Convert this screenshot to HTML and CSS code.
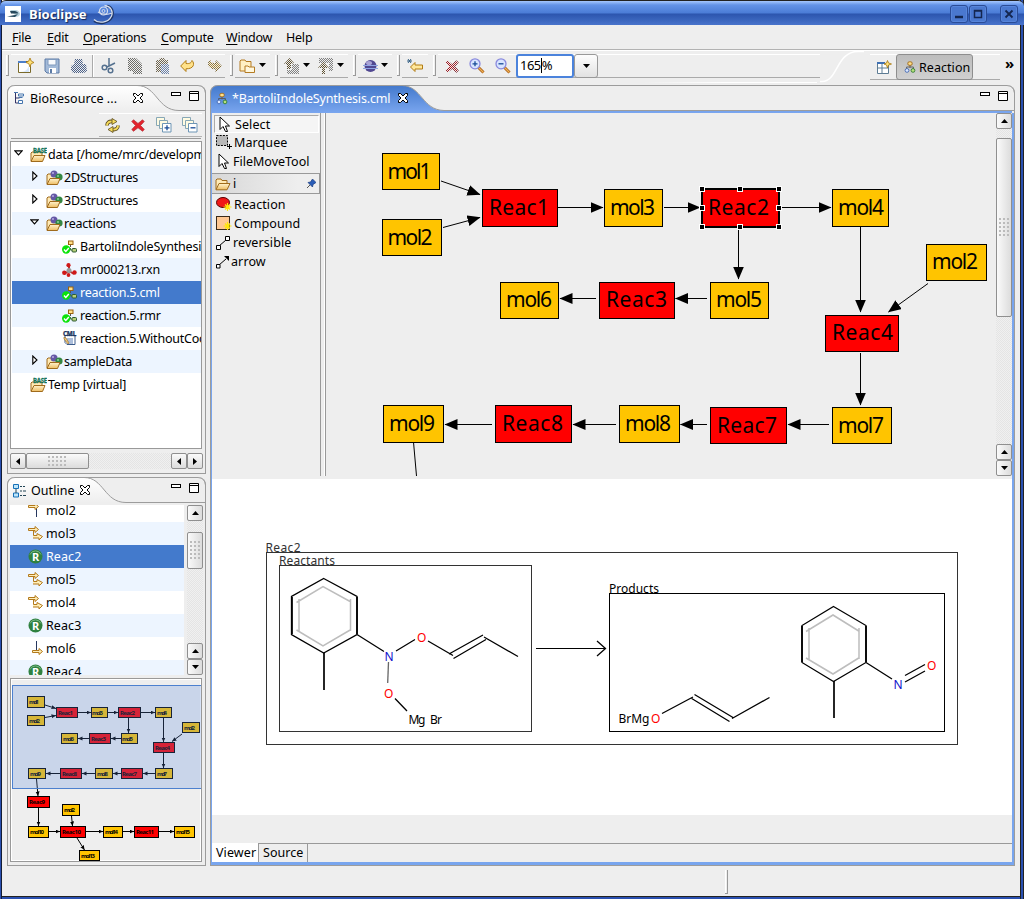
FILE: index.html
```html
<!DOCTYPE html>
<html lang="en">
<head>
<meta charset="utf-8">
<title>Bioclipse</title>
<link rel="stylesheet" href="styles.css">
</head>
<body>
<svg class="defs" width="0" height="0">
  <defs>
    <pattern id="dither" width="2" height="2" patternUnits="userSpaceOnUse"><rect width="1" height="1" fill="#eee"/><rect x="1" y="1" width="1" height="1" fill="#eee"/></pattern>
    <linearGradient id="tabBlue" x1="0" y1="0" x2="0" y2="1"><stop offset="0" stop-color="#4379cc"/><stop offset="1" stop-color="#7aa6ef"/></linearGradient>
    <linearGradient id="tabGray" x1="0" y1="0" x2="0" y2="1"><stop offset="0" stop-color="#fff"/><stop offset="1" stop-color="#eee"/></linearGradient>
    <linearGradient id="fold" x1="0" y1="0" x2="0" y2="1"><stop offset="0" stop-color="#fff3cf"/><stop offset="1" stop-color="#eebd62"/></linearGradient>
    <marker id="arr" markerUnits="userSpaceOnUse" markerWidth="14" markerHeight="12" refX="12.5" refY="5.5" orient="auto"><path d="M0 0L13 5.5L0 11Z"/></marker>
    <marker id="marr" markerUnits="userSpaceOnUse" markerWidth="6" markerHeight="6" refX="4.500" refY="2" orient="auto"><path d="M0 0L4.500 2L0 4Z"/></marker>
    <symbol id="i-react" viewBox="0 0 14 14"><path d="M7 4v4M3 10V7h8v3" fill="none" stroke="#555" /><rect x="4.5" y="1" width="5" height="4" rx="1.5" fill="#ffe08a" stroke="#9a6210"/><circle cx="3.5" cy="11" r="2.2" fill="#dbe8ff" stroke="#3d63b0"/><circle cx="10.5" cy="11" r="2.2" fill="#b7e07a" stroke="#2c7a32"/></symbol>
    <symbol id="i-close" viewBox="0 0 12 12"><path d="M1.5 1.5h2L6 4l2.500-2.500h2v2L8 6l2.500 2.500v2h-2L6 8l-2.500 2.500h-2v-2L4 6L1.500 3.500z" fill="#fff" stroke="#000"/></symbol>
    <symbol id="i-min" viewBox="0 0 10 4"><rect x=".5" y=".5" width="9" height="3" fill="#fff" stroke="#000"/></symbol>
    <symbol id="i-max" viewBox="0 0 10 10"><path d="M.5 .5h9v9h-9zM0 2.500h10" fill="#fff" stroke="#000"/></symbol>
    <symbol id="i-open" viewBox="0 0 16 14"><path d="M1 12.500V3l1-1h4l1 1.500h5V6" fill="#ffeab5" stroke="#a06b1c"/><path d="M1 12.800L4 6.500h11l-3 6.300z" fill="url(#fold)" stroke="#a06b1c"/></symbol>
    <symbol id="i-mfold" viewBox="0 0 17 16"><path d="M1 14V5l1-1h3l1 1h6v2" fill="#ffeab5" stroke="#a06b1c"/><circle cx="8" cy="4" r="3.500" fill="#6457a5"/><circle cx="13" cy="7" r="3.600" fill="#338744"/><circle cx="7" cy="3" r="1" fill="#b7aee0"/><circle cx="12" cy="6" r="1" fill="#8bd09a"/><path d="M1 14.500L4 8.500h10l-2.500 6z" fill="url(#fold)" stroke="#a06b1c"/></symbol>
    <symbol id="i-base" viewBox="0 0 17 16"><path d="M1 14V6l1-1h10v3" fill="#ffeab5" stroke="#a06b1c"/><text x="3" y="6" font-size="7" font-weight="bold" fill="#12745a" stroke="#12745a" stroke-width=".3" textLength="14" lengthAdjust="spacingAndGlyphs">BASE</text><path d="M1 14.500L4 8.500h11l-2.500 6z" fill="url(#fold)" stroke="#a06b1c"/></symbol>
    <symbol id="i-ok" viewBox="0 0 15 14"><path d="M8.500 3v4M8.500 8v2h3" fill="none" stroke="#555"/><rect x="6.500" y="1" width="4.500" height="3.500" fill="#ffe08a" stroke="#9a6210"/><rect x="10" y="8.500" width="4.500" height="3.500" rx="1" fill="#b7d07a" stroke="#2c5a32"/><circle cx="4.200" cy="9.500" r="4.200" fill="#0be30b"/><path d="M2 9.500l1.800 2L6.800 8" fill="none" stroke="#fff" stroke-width="1.400"/></symbol>
    <symbol id="i-rxn" viewBox="0 0 15 14"><path d="M7 2v6L2 11M7 8l5 3" fill="none" stroke="#b33" stroke-width="2"/><circle cx="7" cy="7.500" r="2.500" fill="#999"/><circle cx="6.500" cy="2.200" r="2.100" fill="#cf1818"/><circle cx="2.300" cy="9.800" r="2.200" fill="#cf1818"/><circle cx="12.500" cy="9.500" r="2.200" fill="#cf1818"/><circle cx="6.500" cy="12" r="1.900" fill="#cf1818"/></symbol>
    <symbol id="i-cml" viewBox="0 0 15 15"><path d="M3 4.500h10v9H5l-2-2z" fill="#fff" stroke="#3c5c8c"/><path d="M5 8h6M6 10h5M7 12h4" stroke="#5a7fb8"/><path d="M2 6l2 1 3 5-1 1-4-5z" fill="#eec97c" stroke="#8a5b18" stroke-width=".6"/><text x="1" y="5" font-size="6.500" font-weight="bold" fill="#20355e" stroke="#20355e" stroke-width=".3" textLength="13" lengthAdjust="spacingAndGlyphs">CML</text></symbol>
    <symbol id="i-two" viewBox="0 0 16 16"><path d="M.5 3.500H7v-2l3.500 3-3.500 3v-2H.500zM5.500 5.500v5H9v-2l5.500 3-3.500 3.500v-2H5" fill="#ffeeb8" stroke="#b3791a"/></symbol>
    <symbol id="i-in" viewBox="0 0 16 16"><path d="M8.500 1v9" stroke="#26375e"/><path d="M4.500 10.500H11v-2l3.500 3-3.500 3v-2H4.500z" fill="#ffeeb8" stroke="#b3791a"/></symbol>
    <symbol id="i-out" viewBox="0 0 16 16"><path d="M8.500 6v9" stroke="#26375e"/><path d="M.5 3.500H7v-2l3.500 3-3.500 3v-2H.500z" fill="#ffeeb8" stroke="#b3791a"/></symbol>
    <symbol id="i-R" viewBox="0 0 15 15"><circle cx="7.500" cy="7.500" r="7" fill="#2f8140"/><path d="M2 5.500a6 6 0 0 1 11 0" fill="none" stroke="#79b884"/><text x="4" y="11.500" font-size="11" font-weight="bold" fill="#fff">R</text></symbol>
    <symbol id="i-cursor" viewBox="0 0 11 17"><path d="M1 1v12.500l3-3L6.500 15.500h2L6.500 10h4z" fill="#fff" stroke="#000"/></symbol>
    <symbol id="i-dd" viewBox="0 0 7 4"><path d="M0 0h7L3.500 4z"/></symbol>
    <symbol id="i-up" viewBox="0 0 7 4"><path d="M0 4h7L3.500 0z"/></symbol>
    <symbol id="i-lf" viewBox="0 0 4 7"><path d="M4 0v7L0 3.500z"/></symbol>
    <symbol id="i-rt" viewBox="0 0 4 7"><path d="M0 0v7L4 3.500z"/></symbol>
    <symbol id="i-undo" viewBox="0 0 16 14"><path d="M.7 7L6 1.500v3c4 .5 5.500-1 6-3 3 3 2 8.500-6 8.300V12.500z" fill="#ffe28a" stroke="#b27c15"/></symbol>
    <symbol id="i-x" viewBox="0 0 14 13"><path d="M2.500 .8L7 4.500l4.500-3.700 1.700 1.700L9.500 6.500l3.800 4-1.800 1.700L7 8.700l-4.500 3.500L.8 10.500 4.500 6.500 .8 2.500z" fill="#e4222c" stroke="#b5343c" stroke-width=".8"/></symbol>
    <symbol id="i-stack" viewBox="0 0 16 16"><path d="M.5 .5h8v8h-8z" fill="#fffbe2" stroke="#87a7b6"/><path d="M3.500 3.500h8v8h-8z" fill="#fffbe2" stroke="#87a7b6"/><path d="M6.500 6.500h8.500v8.500H6.500z" fill="#fff" stroke="#6d95b5"/></symbol>
    <symbol id="i-zoom" viewBox="0 0 16 16"><path d="M9.500 9.500l5 5" stroke="#a85c16" stroke-width="3"/><path d="M9.500 9.500l5 5" stroke="#efb255" stroke-width="1.200"/><circle cx="6" cy="5.800" r="5" fill="#d8e4ff" stroke="#8989dd" stroke-width="1.300"/></symbol>
  </defs>
</svg>

<div class="window">
  <header class="titlebar">
    <svg class="applogo" width="16" height="16" viewBox="0 0 16 16"><rect width="16" height="16" fill="#fff"/><path d="M5 4h5c3 0 5 2 5 4s-2 3-5 3H4l6-2z" fill="#b7d2dd"/><path d="M5 5h5c2 .5 3 1.500 3.500 2.500L6 7.500zM2 10.500l8-1.500 3-1-3 3z" fill="#26485c"/></svg>
    <span class="title">Bioclipse</span>
    <svg class="swirl" width="22" height="21" viewBox="0 0 22 21" fill="none"><path d="M1 17c5 3 14 3 18-4 2-5 0-10-5-11" stroke="#1e3566" stroke-width="2.500"/><path d="M1 15.500c4 4 14 4 17.500-3.500 2-5-1-10-7-10.500M5 8c5 3 9 3 14 1" stroke="#d5dded" stroke-width="1.300"/><circle cx="10.500" cy="7" r="4" stroke="#d5dded" stroke-width="1.200"/><circle cx="10.500" cy="7" r="1.500" stroke="#d5dded"/></svg>
    <span class="spacer"></span>
    <span class="wbtn"><svg width="18" height="18"><path d="M5 12h8" stroke="#14264f" stroke-width="2.500"/></svg></span>
    <span class="wbtn"><svg width="18" height="18"><path d="M5.500 5.500h7v7h-7zM5 6h8" fill="none" stroke="#14264f" stroke-width="1.500"/></svg></span>
    <span class="wbtn wclose"><svg width="18" height="18"><path d="M5.500 5.500l7 7M12.500 5.500l-7 7" stroke="#14264f" stroke-width="1.800"/></svg></span>
  </header>

  <nav class="menubar">
    <span class="m1"><u>F</u>ile</span><span class="m2"><u>E</u>dit</span><span class="m3"><u>O</u>perations</span><span class="m4"><u>C</u>ompute</span><span class="m5"><u>W</u>indow</span><span class="m6">Help</span>
  </nav>

  <div class="toolbar">
    <i class="grip"></i>
    <div class="group g1">
      <svg width="17" height="16" viewBox="0 0 17 16"><path d="M1.500 3.500h12v11h-12z" fill="#fff" stroke="#7a6a2a"/><path d="M1 4h8" stroke="#4d7fc9" stroke-width="2"/><path d="M3 14c6 0 8-3 9-7v7z" fill="#d7e7fb"/><path d="M13 0l1.200 3L17 4.500l-2.800 1.200L13 9l-1.200-3.300L9 4.500 11.800 3z" fill="#ffe27a" stroke="#a87911" stroke-width=".8"/></svg>
      <svg width="16" height="16" viewBox="0 0 16 16"><path d="M1 1h14v14H3l-2-2z" fill="#a3bad8" stroke="#5d7ba6"/><path d="M4 1.500h8V7H4z" fill="#f7f9fc" stroke="#7e99bd"/><path d="M5 10h7v5H5z" fill="#fff"/><path d="M6 11h2v4H6z" fill="#5d7ba6"/></svg>
      <svg width="16" height="16" viewBox="0 0 16 16"><path d="M4 1h7l1 5h3l1 7-3 2H2l-2-3V8l3-2z" fill="#4c6188"/><rect width="16" height="16" fill="url(#dither)"/></svg>
      <i class="tsep"></i>
      <svg width="16" height="16" viewBox="0 0 16 16"><path d="M8 0v8M14 5L6 9" stroke="#55718f" stroke-width="1.500"/><circle cx="3.500" cy="9.500" r="2.300" fill="none" stroke="#55718f" stroke-width="1.500"/><circle cx="9.500" cy="12.500" r="2.300" fill="none" stroke="#55718f" stroke-width="1.500"/></svg>
      <svg width="16" height="16" viewBox="0 0 16 16"><path d="M1 0h8l4 4 2 2v10H6v-3H1z" fill="#6c6c68"/><rect width="16" height="16" fill="url(#dither)"/></svg>
      <svg width="16" height="16" viewBox="0 0 16 16"><path d="M2 2h3l1-2h4l1 2h3v4l1 2v8H7v-2H2z" fill="#6f654f"/><path d="M7 6h8v10H7z" fill="#6980a8"/><rect width="16" height="16" fill="url(#dither)"/></svg>
      <svg width="16" height="14"><use href="#i-undo"/></svg>
      <svg width="16" height="14" viewBox="0 0 16 14"><g transform="matrix(-1 0 0 1 16 0)"><path d="M.7 7L6 1.500v3c4 .5 5.500-1 6-3 3 3 2 8.500-6 8.300V12.500z" fill="#a58435" stroke="#705a24"/></g><rect width="16" height="14" fill="url(#dither)"/></svg>
    </div>
    <i class="grip"></i>
    <div class="group g2">
      <svg width="17" height="16" viewBox="0 0 17 16"><path d="M1 13V3l1-1h4l1 1.500h5V13z" fill="#fff0c4" stroke="#b47b22"/><path d="M6 14.500V8h3l1 1h5.500v5.500z" fill="#fff7dd" stroke="#b47b22"/></svg>
      <svg class="dd" width="7" height="4"><use href="#i-dd"/></svg>
    </div>
    <i class="grip"></i>
    <div class="group g3">
      <svg width="16" height="16" viewBox="0 0 16 16"><path d="M5.500 0L10 5 7 6v5H3V6L0 6z" fill="#5e5030"/><path d="M8 6h7v10H3v-4h5z" fill="#808080"/><rect width="16" height="16" fill="url(#dither)"/></svg>
      <svg class="dd" width="7" height="4"><use href="#i-dd"/></svg>
      <svg class="dn" width="16" height="16" viewBox="0 0 16 16"><path d="M1 0h14v5H1zM11 5h4v8h-4z" fill="#808080"/><path d="M5.500 4L11 10H7v6H4v-6H0z" fill="#5e5030"/><rect width="16" height="16" fill="url(#dither)"/></svg>
      <svg class="dd" width="7" height="4"><use href="#i-dd"/></svg>
    </div>
    <i class="grip"></i>
    <div class="group g4">
      <svg width="15" height="14" viewBox="0 0 15 14"><circle cx="7.500" cy="7" r="6" fill="#514891"/><ellipse cx="6" cy="4" rx="3" ry="2" fill="#a9a3d6"/><path d="M0 6.500h15M0 9.500h15" stroke="#8ea4e4"/></svg>
      <svg class="dd" width="7" height="4"><use href="#i-dd"/></svg>
    </div>
    <i class="grip"></i>
    <div class="group g5">
      <svg width="16" height="14" viewBox="0 0 16 14"><path d="M3.500 8L8 3.500V6h7.500v4H8v2.500z" fill="#ffe79b" stroke="#b27c15"/><path d="M0 2h5M1 0l3 4M4 0L1 4" stroke="#27567d" stroke-width=".9"/></svg>
    </div>
    <i class="grip"></i>
    <div class="group g6">
      <svg width="14" height="13" viewBox="0 0 14 13"><path d="M2.500 .8L7 4.500l4.500-3.700 1.700 1.700L9.500 6.500l3.800 4-1.800 1.700L7 8.700l-4.500 3.500L.8 10.500 4.500 6.500 .8 2.500z" fill="#a8141c" stroke="#80343c"/><rect width="14" height="13" fill="url(#dither)"/></svg>
      <svg width="16" height="16" viewBox="0 0 16 16"><use href="#i-zoom"/><path d="M3.500 5.800h5M6 3.300v5" stroke="#164a96" stroke-width="1.300"/></svg>
      <svg width="16" height="16" viewBox="0 0 16 16"><use href="#i-zoom"/><path d="M3.500 5.800h5" stroke="#164a96" stroke-width="1.300"/></svg>
      <div class="combo"><span>165</span><i class="caret"></i><span>%</span></div>
      <div class="combobtn"><svg width="7" height="4"><use href="#i-dd"/></svg></div>
    </div>
    <svg class="swoosh" width="44" height="33" viewBox="0 0 44 33"><path d="M0 31.500h2C18 31.500 16 1.500 38 1.500h6" fill="none" stroke="#fff" stroke-width="1.500"/></svg>
    <div class="group persp">
      <svg width="15" height="15" viewBox="0 0 15 15"><path d="M.5 3.500h11v10H.500zM.500 8h11M5 4v10" fill="#fff" stroke="#5d7c94"/><path d="M0 3h8" stroke="#3e70b4" stroke-width="2"/><path d="M10.500 .5l1 2.500 3 1-3 1-1 3-1-3-2.500-1 2.500-1z" fill="#ffe27a" stroke="#a87911" stroke-width=".8"/></svg>
      <div class="active"><svg width="12" height="12"><use href="#i-react"/></svg><span>Reaction</span></div>
    </div>
    <span class="more">»</span>
  </div>

  <main class="work">
    <div class="left">
      <section class="view v1">
        <div class="vhead">
          <svg class="tabshape" width="199" height="26" viewBox="0 0 199 26"><path d="M.5 26V6L6 .5H130C150 .500 150 25.500 172 25.500H1z" fill="url(#tabGray)"/><path d="M.5 26V7Q1 .500 8 .500H191Q198 1 198.500 8V26M130 .5C150 .500 150 25.500 172 25.500H199" fill="none" stroke="#9c9c9c"/></svg>
          <svg class="vi" width="10" height="13" viewBox="0 0 10 13"><path d="M1.500 1v10h4M1.500 6h4" fill="none" stroke="#336"/><path d="M0 .5h4M4.500 2v2h5V2zM4.500 5.500h4M4.500 8.500v3h4v-3z" fill="#fff" stroke="#4574ad"/></svg>
          <span class="vt">BioResource ...</span>
          <svg class="vx" width="12" height="12"><use href="#i-close"/></svg>
          <svg class="vmin" width="10" height="4"><use href="#i-min"/></svg>
          <svg class="vmax" width="10" height="10"><use href="#i-max"/></svg>
        </div>
        <div class="vtools">
          <svg width="17" height="15" viewBox="0 0 17 15"><path d="M8.500 3.500C5 3 3 4.500 3 7.500M8.500 11.500c3.500 .5 5.500-1 5.500-4" fill="none" stroke="#5a4a1c" stroke-width="3.600"/><path d="M8.500 3.500C5 3 3 4.500 3 7.500M8.500 11.500c3.500 .5 5.500-1 5.500-4" fill="none" stroke="#f7dc5c" stroke-width="2"/><path d="M8 .5l5 3-5 3zM9 8.500l-5 3 5 3z" fill="#f7dc5c" stroke="#5a4a1c" stroke-width=".8"/></svg>
          <svg width="14" height="13"><use href="#i-x"/></svg>
          <svg width="16" height="16" viewBox="0 0 16 16"><use href="#i-stack"/><path d="M8.500 10.800h5M11 8.300v5" stroke="#164a96" stroke-width="1.300"/></svg>
          <svg width="16" height="16" viewBox="0 0 16 16"><use href="#i-stack"/><path d="M8.500 10.800h5" stroke="#164a96" stroke-width="1.300"/></svg>
        </div>
        <div class="tree">
          <div class="row l0"><svg class="tw" width="9" height="6" viewBox="0 0 9 6"><path d="M.8 .8h7.400L4.500 4.800z" fill="#fff" stroke="#000" stroke-width="1.200"/></svg><svg width="17" height="16"><use href="#i-base"/></svg><span>data [/home/mrc/developm</span></div>
          <div class="row l1 alt"><svg class="tr" width="6" height="10" viewBox="0 0 6 10"><path d="M.8 1v8L5 5z" fill="#fff" stroke="#000" stroke-width="1.100"/></svg><svg width="17" height="16"><use href="#i-mfold"/></svg><span>2DStructures</span></div>
          <div class="row l1"><svg class="tr" width="6" height="10" viewBox="0 0 6 10"><path d="M.8 1v8L5 5z" fill="#fff" stroke="#000" stroke-width="1.100"/></svg><svg width="17" height="16"><use href="#i-mfold"/></svg><span>3DStructures</span></div>
          <div class="row l1 alt"><svg class="tw" width="9" height="6" viewBox="0 0 9 6"><path d="M.8 .8h7.400L4.500 4.800z" fill="#fff" stroke="#000" stroke-width="1.200"/></svg><svg width="17" height="16"><use href="#i-mfold"/></svg><span>reactions</span></div>
          <div class="row l2"><svg width="15" height="14"><use href="#i-ok"/></svg><span>BartoliIndoleSynthesis</span></div>
          <div class="row l2 alt"><svg width="15" height="14"><use href="#i-rxn"/></svg><span>mr000213.rxn</span></div>
          <div class="row l2 sel"><svg width="15" height="14"><use href="#i-ok"/></svg><span>reaction.5.cml</span></div>
          <div class="row l2 alt"><svg width="15" height="14"><use href="#i-ok"/></svg><span>reaction.5.rmr</span></div>
          <div class="row l2"><svg width="15" height="15"><use href="#i-cml"/></svg><span>reaction.5.WithoutCoo</span></div>
          <div class="row l1 alt"><svg class="tr" width="6" height="10" viewBox="0 0 6 10"><path d="M.8 1v8L5 5z" fill="#fff" stroke="#000" stroke-width="1.100"/></svg><svg width="17" height="16"><use href="#i-mfold"/></svg><span>sampleData</span></div>
          <div class="row l0 notw"><svg width="17" height="16"><use href="#i-base"/></svg><span>Temp [virtual]</span></div>
        </div>
        <div class="hscroll">
          <b class="sb"><svg width="4" height="7"><use href="#i-lf"/></svg></b>
          <b class="sb hthumb"><i class="dots"></i></b>
          <span class="spacer"></span>
          <b class="sb"><svg width="4" height="7"><use href="#i-lf"/></svg></b>
          <b class="sb"><svg width="4" height="7"><use href="#i-rt"/></svg></b>
        </div>
      </section>

      <section class="view v2">
        <div class="vhead">
          <svg class="tabshape" width="199" height="26" viewBox="0 0 199 26"><path d="M.5 26V6L6 .5H77C97 .500 97 25.500 119 25.500H1z" fill="url(#tabGray)"/><path d="M.5 26V7Q1 .500 8 .500H191Q198 1 198.500 8V26M77 .5C97 .500 97 25.500 119 25.500H199" fill="none" stroke="#9c9c9c"/></svg>
          <svg class="vi" width="13" height="14" viewBox="0 0 13 14"><path d="M.5 .5h5v4h-5zM.500 9h5v4h-5z" fill="#bfe6fa" stroke="#1670b8"/><path d="M3 5v4M7 2.500h2M7 7h2M7 11.500h2M10 7h3M10 2.500h2M10 11.500h3" stroke="#245"/></svg>
          <span class="vt">Outline</span>
          <svg class="vx" width="12" height="12"><use href="#i-close"/></svg>
          <svg class="vmin" width="10" height="4"><use href="#i-min"/></svg>
          <svg class="vmax" width="10" height="10"><use href="#i-max"/></svg>
        </div>
        <div class="olist">
          <div class="orows">
            <div class="orow"><svg width="16" height="16"><use href="#i-out"/></svg><span>mol2</span></div>
            <div class="orow alt"><svg width="16" height="16"><use href="#i-two"/></svg><span>mol3</span></div>
            <div class="orow sel"><svg width="15" height="15"><use href="#i-R"/></svg><span class="rc">Reac2</span></div>
            <div class="orow alt"><svg width="16" height="16"><use href="#i-two"/></svg><span>mol5</span></div>
            <div class="orow"><svg width="16" height="16"><use href="#i-two"/></svg><span>mol4</span></div>
            <div class="orow alt"><svg width="15" height="15"><use href="#i-R"/></svg><span class="rc">Reac3</span></div>
            <div class="orow"><svg width="16" height="16"><use href="#i-in"/></svg><span>mol6</span></div>
            <div class="orow alt"><svg width="15" height="15"><use href="#i-R"/></svg><span class="rc">Reac4</span></div>
          </div>
          <div class="vscroll">
            <b class="sb"><svg width="7" height="4"><use href="#i-up"/></svg></b>
            <b class="sb othumb"><i class="dots"></i></b>
            <span class="spacer"></span>
            <b class="sb"><svg width="7" height="4"><use href="#i-up"/></svg></b>
            <b class="sb"><svg width="7" height="4"><use href="#i-dd"/></svg></b>
          </div>
        </div>
        <div class="mini">
          <svg width="189" height="181" viewBox="12 680 189 181">
            <g class="mw">
              <path d="M45 705L56 708.500"/><path d="M45 717.500L56 715.500"/><path d="M78 712.500H91"/><path d="M108 712.500H118"/><path d="M141 712.500H155"/><path d="M128.500 718V733"/><path d="M163.500 718V742"/><path d="M182 734L172 741.500"/><path d="M121 738.500H111"/><path d="M89 738.500H78"/><path d="M163.500 753V768"/><path d="M155 773.500H143"/><path d="M121 773.500H113"/><path d="M95 773.500H82"/><path d="M60 773.500H46"/><path d="M36.500 779L38 796"/><path d="M38.500 808V826"/><path d="M71.500 816L72.500 826"/><path d="M49 831.500H60"/><path d="M86 831.500H103"/><path d="M123 831.500H134"/><path d="M159 831.500H174"/><path d="M77 838L84.500 850"/>
            </g>
            <g class="my"><rect x="27.500" y="696.500" width="17" height="11"/><rect x="27.500" y="715.500" width="17" height="10"/><rect x="91.500" y="707.500" width="16" height="10"/><rect x="155.500" y="707.500" width="16" height="10"/><rect x="182.500" y="722.500" width="17" height="10"/><rect x="121.500" y="733.500" width="16" height="10"/><rect x="61.500" y="733.500" width="16" height="10"/><rect x="28.500" y="768.500" width="17" height="10"/><rect x="95.500" y="768.500" width="17" height="10"/><rect x="155.500" y="768.500" width="17" height="10"/><rect x="62.500" y="804.500" width="17" height="11"/><rect x="28.500" y="826.500" width="20" height="11"/><rect x="103.500" y="826.500" width="19" height="11"/><rect x="174.500" y="826.500" width="20" height="11"/><rect x="79.500" y="850.500" width="20" height="10"/></g>
            <g class="mr"><rect x="56.500" y="707.500" width="21" height="10"/><rect x="118.500" y="707.500" width="22" height="10"/><rect x="89.500" y="733.500" width="21" height="10"/><rect x="153.500" y="742.500" width="21" height="10"/><rect x="60.500" y="768.500" width="21" height="10"/><rect x="121.500" y="768.500" width="21" height="10"/><rect x="27.500" y="796.500" width="22" height="11"/><rect x="60.500" y="826.500" width="25" height="11"/><rect x="134.500" y="826.500" width="24" height="11"/></g>
            <g class="mt">
              <text x="29" y="704" textLength="10">mol1</text><text x="29" y="723" textLength="11">mol2</text><text x="58" y="715" textLength="15">Reac1</text><text x="92" y="715" textLength="11">mol3</text><text x="120" y="715" textLength="15">Reac2</text><text x="157" y="715" textLength="10">mol4</text><text x="184" y="730" textLength="11">mol2</text><text x="155" y="750" textLength="15">Reac4</text><text x="122" y="741" textLength="11">mol5</text><text x="91" y="741" textLength="15">Reac3</text><text x="63" y="741" textLength="11">mol6</text><text x="30" y="776" textLength="11">mol9</text><text x="62" y="776" textLength="15">Reac8</text><text x="97" y="776" textLength="11">mol8</text><text x="122" y="776" textLength="15">Reac7</text><text x="157" y="776" textLength="10">mol7</text><text x="29" y="804" textLength="16">Reac9</text><text x="64" y="812" textLength="11">mol2</text><text x="30" y="834" textLength="14">mol10</text><text x="62" y="834" textLength="19">Reac10</text><text x="105" y="834" textLength="13">mol14</text><text x="136" y="834" textLength="18">Reac11</text><text x="176" y="834" textLength="14">mol15</text><text x="81" y="858" textLength="14">mol13</text>
            </g>
            <rect x="12.500" y="685.500" width="192" height="103" fill="#5b8be0" fill-opacity=".25" stroke="#4c80cf"/>
          </svg>
        </div>
      </section>
    </div>

    <section class="editor">
      <div class="ehead">
        <svg class="tabshape" width="805" height="28" viewBox="0 0 805 28"><path d="M.5 28V8Q1 .500 8 .500H192C212 1 212 25.500 234 25.500H802V28z" fill="url(#tabBlue)"/><path d="M.5 28V8Q1 .500 8 .500H797Q804 1 804.500 8V28M192 .5C212 1 212 25 234 25.500H804" fill="none" stroke="#9c9c9c"/></svg>
        <svg class="vi" width="12" height="13"><use href="#i-react"/></svg>
        <span class="vt">*BartoliIndoleSynthesis.cml</span>
        <svg class="vx" width="12" height="12"><use href="#i-close"/></svg>
        <svg class="vmin" width="10" height="4"><use href="#i-min"/></svg>
        <svg class="vmax" width="10" height="10"><use href="#i-max"/></svg>
      </div>
      <div class="ebody">
        <div class="top">
          <aside class="palette">
            <div class="pitem on"><svg width="11" height="17"><use href="#i-cursor"/></svg><span>Select</span></div>
            <div class="pitem"><svg width="17" height="15" viewBox="0 0 17 15"><rect x=".5" y=".5" width="11" height="10" fill="#b8b8b8" stroke="#000" stroke-dasharray="2 1.200"/><path d="M11 11.500h5M13.500 9v5" stroke="#000"/></svg><span class="mq">Marquee</span></div>
            <div class="pitem fm"><svg width="11" height="17"><use href="#i-cursor"/></svg><span>FileMoveTool</span></div>
            <div class="drawer"><svg width="16" height="14"><use href="#i-open"/></svg><span>i</span><svg class="pin" width="9" height="9" viewBox="0 0 9 9"><path d="M0 9l3-3" stroke="#555"/><path d="M1 3.500l2.500-.5L5.500 0 9 3.500 6 5.500 5.500 8z" fill="#2a5db8" stroke="#173a7c" stroke-width=".7"/></svg></div>
            <div class="pitem p1"><svg width="16" height="15" viewBox="0 0 16 15"><ellipse cx="7" cy="5.500" rx="6.500" ry="5" fill="#f01818" stroke="#500"/><path d="M11.500 6v8M7.500 10h8M9 7.500l5 5M14 7.500l-5 5" stroke="#ffe60a" stroke-width="1.200"/></svg><span>Reaction</span></div>
            <div class="pitem"><svg width="16" height="15" viewBox="0 0 16 15"><rect x=".5" y=".5" width="13" height="13" fill="#ffc893" stroke="#3a2a1a"/><path d="M11.500 6v8M7.500 10h8M9 7.500l5 5M14 7.500l-5 5" stroke="#ffe60a" stroke-width="1.200"/></svg><span>Compound</span></div>
            <div class="pitem"><svg width="14" height="14" viewBox="0 0 14 14"><path d="M3 10l7-6" stroke="#000"/><path d="M.5 9.500h4v4h-4zM9.500 .5h4v4h-4z" fill="#fff" stroke="#000"/></svg><span class="rv">reversible</span></div>
            <div class="pitem"><svg width="14" height="14" viewBox="0 0 14 14"><path d="M3 10l7-6" stroke="#000"/><path d="M.5 9.500h3.500v3.500H.500z" fill="#fff" stroke="#000"/><path d="M8 1h5v5z"/></svg><span class="ar">arrow</span></div>
          </aside>
          <svg class="canvas" width="670" height="366" viewBox="326 113 670 366">
            <g stroke="#000" fill="none" marker-end="url(#arr)">
              <path d="M441 181L480 194.500"/><path d="M443 227.500L480 217.500"/><path d="M558 207.500H603"/><path d="M664 207.500H700" /><path d="M782 207.500H831"/><path d="M738.500 230V279"/><path d="M860.500 227V312"/><path d="M928 283.500L888.500 312"/><path d="M707 298.500H675.500"/><path d="M596 298.500H560"/><path d="M860.500 353V405"/><path d="M829 424.500H788"/><path d="M707 424.500H680.500"/><path d="M616 424.500H573"/><path d="M492 424.500H445"/>
            </g>
            <path d="M413.500 442L416.500 476" stroke="#000"/>
            <g fill="#ffc400" stroke="#000"><rect x="382.500" y="153.500" width="57" height="36"/><rect x="382.500" y="219.500" width="59" height="36"/><rect x="604.500" y="189.500" width="58" height="37"/><rect x="500.500" y="282.500" width="58" height="36"/><rect x="832.500" y="189.500" width="56" height="37"/><rect x="926.500" y="244.500" width="60" height="36"/><rect x="710.500" y="282.500" width="58" height="36"/><rect x="832.500" y="407.500" width="59" height="36"/><rect x="619.500" y="405.500" width="60" height="37"/><rect x="383.500" y="405.500" width="60" height="37"/></g>
            <g fill="#f00" stroke="#000"><rect x="482.500" y="189.500" width="75" height="37"/><rect x="599.500" y="282.500" width="75" height="36"/><rect x="825.500" y="315.500" width="73" height="36"/><rect x="710.500" y="407.500" width="76" height="36"/><rect x="495.500" y="405.500" width="76" height="37"/><rect x="702" y="189" width="77" height="38" stroke-width="2"/></g>
            <g class="nt">
              <text x="387.500" y="179" textLength="44">mol1</text><text x="387.500" y="245" textLength="45">mol2</text><text x="489" y="215" textLength="60">Reac1</text><text x="610" y="215" textLength="45">mol3</text><text x="708" y="215" textLength="61">Reac2</text><text x="838" y="215" textLength="46">mol4</text><text x="932" y="269" textLength="46">mol2</text><text x="506" y="307" textLength="46">mol6</text><text x="606" y="307" textLength="61">Reac3</text><text x="716" y="307" textLength="46">mol5</text><text x="832" y="340" textLength="61">Reac4</text><text x="838" y="433" textLength="46">mol7</text><text x="717" y="433" textLength="60">Reac7</text><text x="625" y="431" textLength="46">mol8</text><text x="502" y="431" textLength="61">Reac8</text><text x="389" y="431" textLength="46">mol9</text>
            </g>
            <g fill="#000" stroke="#fff"><rect x="699.500" y="186.500" width="5" height="5"/><rect x="737.500" y="186.500" width="5" height="5"/><rect x="776.500" y="186.500" width="5" height="5"/><rect x="699.500" y="205.500" width="5" height="5"/><rect x="776.500" y="205.500" width="5" height="5"/><rect x="699.500" y="224.500" width="5" height="5"/><rect x="737.500" y="224.500" width="5" height="5"/><rect x="776.500" y="224.500" width="5" height="5"/></g>
          </svg>
          <div class="vscroll cs">
            <b class="sb"><svg width="7" height="4"><use href="#i-up"/></svg></b>
            <b class="sb cthumb"><i class="dots"></i></b>
            <span class="spacer"></span>
            <b class="sb"><svg width="7" height="4"><use href="#i-up"/></svg></b>
            <b class="sb"><svg width="7" height="4"><use href="#i-dd"/></svg></b>
          </div>
        </div>
        <div class="viewer">
          <svg width="800" height="336" viewBox="212 479 800 336">
            <g fill="none" stroke="#333"><rect x="266.500" y="552.500" width="691" height="192"/><rect x="279.500" y="565.500" width="252" height="166"/><rect x="609.500" y="593.500" width="335" height="138" stroke="#000"/></g>
            <g class="rt"><text x="265.500" y="552" textLength="35" fill="#333">Reac2</text><text x="279" y="565" textLength="56" fill="#333">Reactants</text><text x="609" y="593" textLength="50">Products</text></g>
            <g fill="none" stroke="#bdbdbd" stroke-width="1.500"><path d="M296.500 602.500L323 586.500L351 602M350.500 599V631M351 629.500L323 646L296.500 630M299 599V632"/><path d="M806 631.500L833 615L859.500 631.500M859 628V659M859.500 657.500L833 674L806 658M809 628V659"/></g>
            <g fill="none" stroke="#000" stroke-width="1.300">
              <path d="M323.700 578.500L357 596.500V634.500L323.700 653L291.500 634.500V596.500zM357 634.500L384 651.500M396 651L415 639.500M428 641L453 655.500M449 654L483 635M453.500 658.500L486 639.500M484 637L518 656.500M395 698.500L407 711"/>
              <path d="M388.500 662L387.700 683" stroke="#666"/>
              <path d="M536 648.500H605" stroke-width="1"/><path d="M597 641L605.500 648.500L597 656"/>
              <path d="M833.500 606.500L866 625.500V662.500L833.500 681.500L802 662.500V625.500zM866 662.500L892 679M905 675.500L925 664.500M905 682L925 671M662 713.500L693 697M694.500 694.500L733 717.500M691.700 698.500L729.500 721.500M732 718.500L769.500 697.500"/>
              <path d="M324 653V690M834 681V718M292 597V634M357 597V634M802 626V662M866 626V662" stroke-width="1.700"/>
            </g>
            <g class="at"><text x="384.500" y="660.500" fill="#11c">N</text><text x="417" y="642" fill="#f00" textLength="9">O</text><text x="384" y="697.500" fill="#f00" textLength="9">O</text><text x="408.500" y="723.500" textLength="17">Mg</text><text x="430" y="723.500" textLength="12">Br</text><text x="618.500" y="722.500" textLength="31">BrMg</text><text x="651" y="723" fill="#f00" textLength="9">O</text><text x="893.500" y="688.500" fill="#11c">N</text><text x="927" y="670" fill="#f00" textLength="9">O</text></g>
          </svg>
        </div>
        <div class="gap"></div>
        <div class="btabs"><span class="cur">Viewer</span><span class="src">Source</span></div>
      </div>
    </section>
  </main>
  <footer class="status"><i></i></footer>
</div>
</body>
</html>
```

FILE: styles.css
```css
* { box-sizing: border-box; }
body { margin: 0; width: 1024px; height: 899px; overflow: hidden; background: #2a50b0; font-family: "Noto Sans", "Open Sans", sans-serif; font-size: 12.5px; letter-spacing: -.22px; color: #000; }
svg { display: block; flex: none; }
span { white-space: nowrap; }
.defs { position: absolute; }
.spacer { flex: 1; }
.window { display: flex; flex-direction: column; height: 899px; background: #eee; box-shadow: inset 1px 0 #2a50b0, inset 2px 0 #141c33, inset -1px 0 #222, inset -3px 0 #2a50b0, inset -4px 0 #222, inset 0 -2px #2a50b0, inset 0 -3px #222; }

.titlebar { display: flex; align-items: center; flex: none; height: 25px; padding: 2px 6px 0 5px; border-top: 1px solid #222; border-radius: 6px 6px 0 0; background: linear-gradient(#a6c8ff 0, #6393e8 4px, #4b7cd6 12px, #2c55ae 13px, #3d68c0 20px, #4873cb 24px); }
.title { margin: -1px 0 0 8px; width: 62px; color: #fff; font: bold 13px "Noto Sans", "Open Sans", sans-serif; letter-spacing: 0; text-shadow: 1px 1px 1px #14264f; }
.swirl { margin-left: 2px; }
.wbtn { width: 18px; height: 18px; margin: -1px 0 0 1px; border: 1px solid #2a4c97; border-radius: 3px; background: #4a78cf; box-shadow: inset 0 0 0 1px #5785da; }
.wbtn svg { margin: -1px; }
.wclose { margin-left: 13px; }

.menubar { display: flex; flex: none; height: 25px; margin: 0 4px 0 2px; padding: 3px 0 0 10px; line-height: 19px; border-bottom: 1px solid #b2b2b2; }
.menubar u { text-underline-offset: 2px; }
.m1 { width: 35px; } .m2 { width: 36px; } .m3 { width: 78px; } .m4 { width: 65px; } .m5 { width: 60px; }

.toolbar { display: flex; flex: none; height: 33px; margin: 0 4px 0 2px; padding: 3px 0 0 4px; border-top: 1px solid #fff; background: linear-gradient(90deg, transparent 640px, #fff 720px) 0 31px / 815px 1px no-repeat; }
.grip { flex: none; width: 3px; height: 21px; margin: 1px 2px 0 0; border: solid #999; border-width: 0 1px 1px 0; box-shadow: inset 1px 0 #fff; }
.group { display: flex; align-items: center; flex: none; height: 24px; border-top: 1px solid #fff; border-bottom: 1px solid #aaa; }
.group + .grip { margin-left: 5px; }
.g1 { width: 214px; padding-left: 6px; gap: 10.300px; }
.tsep { width: 1px; height: 22px; background: #aaa; box-shadow: 1px 0 #fff; margin: 0 -2px 0 -5px; }
.g2 { width: 35px; padding-left: 4px; }
.dd { margin: -3px 0 0 3px; }
.g3 { width: 68px; padding-left: 4px; }
.dn { margin-left: 8px; }
.g4 { width: 34px; padding-left: 5px; }
.g5 { width: 26px; padding-left: 5px; }
.g6 { width: 382px; padding-left: 7px; gap: 10px; }
.combo { display: flex; align-items: center; width: 58px; height: 24px; margin-left: -5px; padding: 0 0 2px 2px; border: 2px solid #4b83dc; border-radius: 3px; background: #fff; font-size: 13px; letter-spacing: -.5px; }
.caret { width: 1px; height: 15px; background: #000; }
.combobtn { display: flex; align-items: center; justify-content: center; width: 24px; height: 24px; margin-left: -10px; border: 1px solid #999; border-radius: 3px; background: linear-gradient(#fdfdfd, #e2e2e2); }
.swoosh { margin: -4px 6px 0 0; }
.persp { width: 130px; height: 26px; padding-left: 7px; }
.active { display: flex; align-items: center; width: 77px; height: 26px; margin-left: 4px; padding-left: 7px; gap: 3px; border: 1px solid #8e8e8e; border-radius: 3px; background: linear-gradient(#bdbdbd, #d0d0d0); letter-spacing: .05px; }
.more { margin: -1px 0 0 5px; font-size: 15px; font-weight: bold; line-height: 20px; }

.work { display: flex; flex: none; height: 783px; padding: 2px 0 0 7px; }
.left { display: flex; flex-direction: column; width: 199px; margin-right: 4px; gap: 3px; }
.view { display: flex; flex-direction: column; height: 389px; border: solid #9c9c9c; border-width: 0 1px 1px; border-radius: 8px 8px 0 0; }
.vhead { position: relative; display: flex; flex: none; height: 26px; margin: 0 -1px; padding-left: 7px; }
.vhead > *, .ehead > * { position: relative; flex: none; }
.vhead .tabshape, .ehead .tabshape { position: absolute; left: 0; top: 0; }
.vi { margin: 7px 0 0; }
.vt { line-height: 28px; }
.vx { margin-top: 7px; }
.vmin { margin-top: 7px; }
.vmax { margin: 6px 0 0 8px; }
.v1 .vt { width: 100px; margin-left: 6px; letter-spacing: .05px; } .v1 .vx { margin-left: 2px; } .v1 .vmin { margin-left: 27px; }
.v2 .vi { margin-left: -1px; } .v2 .vt { width: 48px; margin-left: 5px; letter-spacing: .05px; } .v2 .vmin { margin-left: 80px; }
.vtools { display: flex; align-items: center; justify-content: flex-end; height: 24px; margin: 2px 3px 1px 91px; padding-right: 4px; gap: 10.400px; border-top: 1px solid #fff; border-bottom: 1px solid #b4b4b4; }
.tree { height: 308px; margin: 3px 3px 0 2px; padding: 1px 0 0 1px; border: 1px solid #999; box-shadow: 0 -3px 0 -1px #eee, 0 -4px 0 -1px #999; background: #fff; overflow: hidden; }
.row { display: flex; align-items: center; height: 23px; white-space: nowrap; overflow: hidden; }
.row span { margin-left: 1px; }
.alt { background: #edf5ff; }
.sel { background: #437acc; color: #fff; }
.tw, .tr { margin-top: -3px; }
.l0 { padding-left: 2px; } .l0 .tw { margin-right: 7px; }
.notw { padding-left: 18px; }
.l1 { padding-left: 18px; } .l1 .tw { margin-right: 7px; } .l1 .tr { margin: -3px 8px 0 2px; }
.l2 { padding-left: 50px; } .l2 span { margin-left: 3px; }
.hscroll { display: flex; height: 16px; margin: 4px 2px 0 2px; background: repeating-conic-gradient(#e4e4e4 0 25%, #f0f0f0 0 50%) 0 0 / 2px 2px; }
.sb { display: flex; flex: none; align-items: center; justify-content: center; width: 16px; height: 16px; border: 1px solid #8f8f8f; border-radius: 2px; background: linear-gradient(#fafafa, #dcdcdc); }
.hthumb { width: 63px; }
.dots { width: 19px; height: 11px; background: radial-gradient(circle at 1px 1px, #bbb .8px, transparent 1px) 0 0 / 4px 4px; }

.olist { display: flex; height: 170px; margin: 2px 2px 0 2px; }
.orows { width: 174px; height: 170px; overflow: hidden; }
.orow { display: flex; align-items: center; height: 23px; padding: 0 0 1px 18px; background: #fff; letter-spacing: .08px; }
.orow.alt { background: #edf5ff; }
.orow.sel { background: #437acc; }
.orow:first-child { margin-top: -6px; }
.orow span { margin-left: 2px; } .orow .rc { margin-left: 3px; }
.vscroll { display: flex; flex-direction: column; width: 16px; margin-left: 3px; background: repeating-conic-gradient(#e4e4e4 0 25%, #f0f0f0 0 50%) 0 0 / 2px 2px; }
.vscroll .sb { background: linear-gradient(90deg, #fafafa, #dcdcdc); }
.othumb { height: 37px; margin-top: 11px; }
.othumb .dots, .cthumb .dots { width: 11px; height: 19px; }
.mini { height: 184px; margin: 3px 3px 0 2px; padding: 1px 0 0 1px; border: 1px solid #999; box-shadow: inset 0 0 0 1px #fff; overflow: hidden; }
.mw path { stroke: #000; fill: none; marker-end: url(#marr); }
.my rect { fill: #ffc400; stroke: #000; } .mr rect { fill: #f00; stroke: #000; }
.mt text { font-size: 6px; font-weight: bold; letter-spacing: 0; }

.editor { display: flex; flex-direction: column; width: 805px; height: 781px; border: 1px solid #9c9c9c; border-top: 0; border-radius: 8px 8px 0 0; }
.ehead { position: relative; display: flex; flex: none; height: 28px; margin: 0 -1px; padding-left: 6px; color: #fff; }
.ehead .vt { width: 165px; margin-left: 4px; letter-spacing: -.17px; }
.ehead .vx { margin-left: 0; } .ehead .vmin { margin-left: 571px; }
.ebody { display: flex; flex-direction: column; height: 752px; border: solid #78a5ee; border-width: 0 2px 3px 1px; }
.top { display: flex; height: 366px; }
.palette { width: 114px; height: 363px; padding: 0 5px 0 0; border-right: 1px solid #999; box-shadow: inset -1px 0 #fff, inset -4px 0 #eee, inset -5px 0 #999; }
.pitem { display: flex; align-items: center; height: 19px; padding-left: 4px; letter-spacing: .1px; }
.pitem span { margin-left: 2px; }
.pitem.on { margin: 2px 1px 0 2px; height: 18px; padding-left: 4px; border: 1px solid; border-color: #aaa #fff #fff #aaa; background: #f5f5f5; }
.pitem.on span { margin-left: 5px; }
.pitem .mq { margin-left: 1px; } .pitem .rv { margin-left: 3px; }
.fm { padding-left: 6px; } .fm span { margin-left: 4px; letter-spacing: 0; }
.pitem .ar { margin-left: 1px; }
.drawer { display: flex; align-items: center; height: 21px; margin: 2px 0 1px; padding: 0 3px 0 3px; border: solid #999; border-width: 1px 1px 1px 0; background: linear-gradient(90deg, #d8d8d8, #eee 80%); }
.drawer span { margin-left: 2px; } .pin { margin-left: auto; }
.canvas { background: #eee; }
.nt text { font-size: 21px; letter-spacing: 0; }
.cs { margin-left: 0; height: 363px; }
.cthumb { height: 179px; margin-top: 9px; }
.viewer { height: 336px; background: #fff; }
.rt text { font-size: 12px; letter-spacing: 0; }
.at text { font-size: 12px; letter-spacing: 0; }
.gap { flex: 1; }
.btabs { display: flex; height: 19px; border-top: 1px solid #999; line-height: 18px; }
.btabs span { padding-left: 4px; border-right: 1px solid #999; }
.btabs .cur { width: 47px; margin-top: -1px; padding-top: 1px; background: #fff; letter-spacing: .1px; }
.btabs .src { width: 49px; letter-spacing: .05px; }
.status { padding: 4px 0 0 725px; }
.status i { display: block; width: 3px; height: 24px; border: solid #999; border-width: 0 1px 1px 0; box-shadow: inset 1px 0 #fff; }
```
